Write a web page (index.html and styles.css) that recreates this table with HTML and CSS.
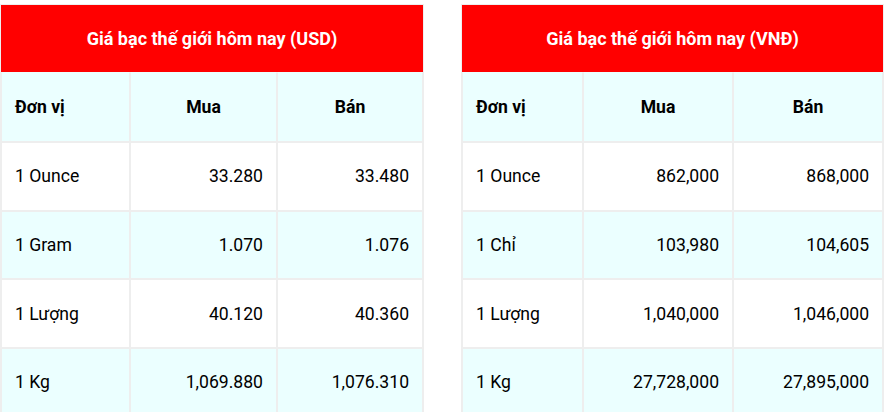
FILE: index.html
```html
<!DOCTYPE html>
<html lang="vi">
<head>
<meta charset="utf-8">
<title>Giá bạc thế giới hôm nay</title>
<link rel="stylesheet" href="styles.css">
</head>
<body>
<div class="wrap">
  <table class="price price-usd">
    <colgroup><col class="c1"><col class="c2"><col class="c3"></colgroup>
    <thead>
      <tr><th class="title" colspan="3">Giá bạc thế giới hôm nay (USD)</th></tr>
      <tr class="head"><th class="unit">Đơn vị</th><th>Mua</th><th>Bán</th></tr>
    </thead>
    <tbody>
      <tr><td class="unit">1 Ounce</td><td>33.280</td><td>33.480</td></tr>
      <tr class="alt"><td class="unit">1 Gram</td><td>1.070</td><td>1.076</td></tr>
      <tr><td class="unit">1 Lượng</td><td>40.120</td><td>40.360</td></tr>
      <tr class="alt"><td class="unit">1 Kg</td><td>1,069.880</td><td>1,076.310</td></tr>
    </tbody>
  </table>
  <table class="price price-vnd">
    <colgroup><col class="c1"><col class="c2"><col class="c3"></colgroup>
    <thead>
      <tr><th class="title" colspan="3">Giá bạc thế giới hôm nay (VNĐ)</th></tr>
      <tr class="head"><th class="unit">Đơn vị</th><th>Mua</th><th>Bán</th></tr>
    </thead>
    <tbody>
      <tr><td class="unit">1 Ounce</td><td>862,000</td><td>868,000</td></tr>
      <tr class="alt"><td class="unit">1 Chỉ</td><td>103,980</td><td>104,605</td></tr>
      <tr><td class="unit">1 Lượng</td><td>1,040,000</td><td>1,046,000</td></tr>
      <tr class="alt"><td class="unit">1 Kg</td><td>27,728,000</td><td>27,895,000</td></tr>
    </tbody>
  </table>
</div>
</body>
</html>
```

FILE: styles.css
```css
html, body {
  margin: 0;
  padding: 0;
  background: #fff;
}
body {
  font-family: Roboto, "Liberation Sans", Arial, sans-serif;
  color: #000;
  overflow: hidden;
}
.wrap {
  display: flex;
  align-items: flex-start;
  gap: 37px;
  padding-top: 4px;
}
.price {
  border-collapse: separate;
  border-spacing: 0;
  border: 1px solid #eee;
  table-layout: fixed;
  flex: none;
}
.price-usd { width: 424px; }
.price-vnd { width: 423px; }
.price-usd .c1 { width: 129px; }
.price-usd .c2 { width: 147px; }
.price-usd .c3 { width: 146px; }
.price-vnd .c1 { width: 121px; }
.price-vnd .c2 { width: 150px; }
.price-vnd .c3 { width: 150px; }

.price th,
.price td {
  border: 1px solid #eee;
  font-size: 17.6px;
  line-height: 20px;
  padding: 23.33px 13px;
  white-space: nowrap;
}
.price th {
  font-weight: 700;
  text-align: center;
}
.price td {
  font-weight: 400;
  text-align: right;
}
.price .unit {
  text-align: left;
}
.price .title {
  background: #ff0000;
  border-color: #ff0000;
  color: #fff;
  font-size: 18px;
  padding: 22.5px 13px;
}
.price .head th {
  background: #ebffff;
  border-top-color: transparent;
  padding: 24px 13px;
}
.price .alt td {
  background: #ebffff;
}
```
